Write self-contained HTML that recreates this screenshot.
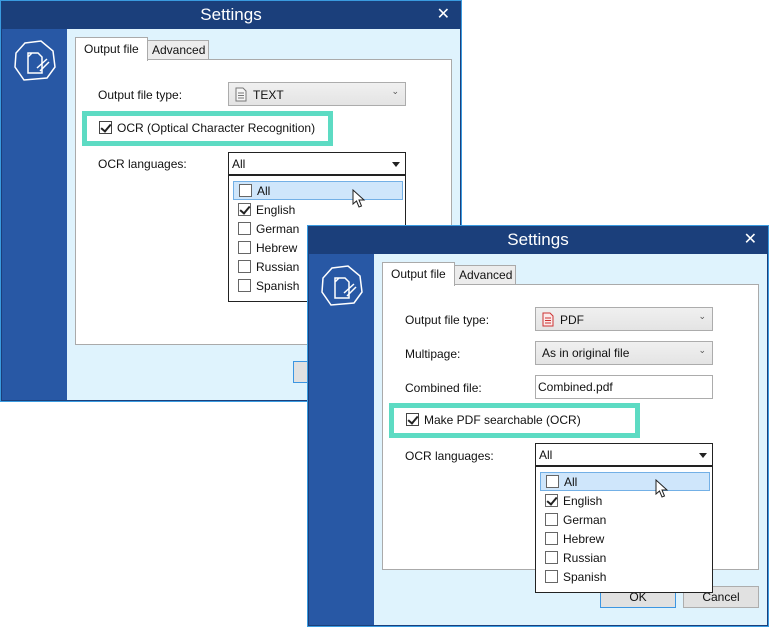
<!DOCTYPE html>
<html><head><style>
*{margin:0;padding:0;box-sizing:border-box}
body{width:769px;height:627px;background:#fff;position:relative;overflow:hidden;font-family:"Liberation Sans",sans-serif;font-size:12px;color:#111}
.win{position:absolute;width:462px;height:402px;background:#1b3f7b;border:1px solid #3a9be0}
.win .in{position:absolute;left:-1px;top:-1px;right:-1px;bottom:1px}
.title{position:absolute;left:0;right:0;top:0;height:29px;color:#fff;font-size:17px;text-align:center;line-height:29px}
.x{position:absolute;right:12px;top:0;color:#fff;font-size:16px;line-height:29px}
.side{position:absolute;left:2px;top:29px;width:65px;bottom:0;background:#2858a5}
.cont{position:absolute;left:67px;top:29px;right:2px;bottom:0;background:#dff3fd}
.a{position:absolute}
.tab1{left:75px;top:37px;width:73px;height:24px;background:#fff;border:1px solid #aaa;border-bottom:none;padding:4px 0 0 8px;z-index:2}
.tab2{left:147px;top:40px;width:62px;height:20px;background:#ececec;border:1px solid #aaa;padding:2px 0 0 4px}
.panel{left:75px;top:59px;width:377px;height:286px;background:#fff;border:1px solid #aaa}
.lbl{left:98px}
.combo{left:228px;width:178px;height:24px;background:linear-gradient(#f0f0f0,#e4e4e4);border:1px solid #acacac;padding:4px 0 0 6px}
.combo .v{position:absolute;right:6px;top:3px;font-size:9px;color:#555}
.hl{left:82px;width:251px;height:35px;background:#5ddbc3;padding:5px}
.hl div{background:#fff;width:100%;height:100%;padding:5px 0 0 12px}
.cb{display:inline-block;width:13px;height:13px;border:1px solid #444;vertical-align:-2px;margin-right:5px;position:relative;background:#fff}
.cb.c:after{content:"";position:absolute;left:3px;top:0px;width:4px;height:8px;border:solid #222;border-width:0 2px 2px 0;transform:rotate(40deg)}
.lc{left:228px;width:178px;height:24px;background:#fff;border:1px solid #222;padding:4px 0 0 3px}
.lc:after{content:"";position:absolute;right:5px;top:9px;border:4px solid transparent;border-top:5px solid #222;border-bottom:none}
.dd{left:228px;width:178px;height:128px;background:#fff;border:1px solid #222;border-top:2px solid #222;z-index:3}
.it{position:absolute;left:4px;width:170px;height:19px;padding:2px 0 0 5px}
.it .cb{border-color:#666}
.sel{background:#cfe6fb;border:1px solid #73b0e6}
.btn{top:361px;width:76px;height:22px;background:#e1e1e1;border:1px solid #adadad;text-align:center;line-height:20px}
.ok{border-color:#3c96e2}
</style></head><body>

<!-- window 1 -->
<div class="win" style="left:0;top:0;z-index:1">
<div class="in">
<div class="title">Settings</div><div class="x">✕</div>
<div class="side"></div><div class="cont"></div>
<svg class="a" style="left:13px;top:40px" width="44" height="42" viewBox="0 0 44 42"><path d="M12 3 L28 1 L40 11 L42 27 L34 38 L11 40 L2 27 L3 13 Z" fill="none" stroke="#fff" stroke-width="1.5"/><path d="M15 13 L25 13 L29 17 L29 33 L15 33 Z M15 17 L19 13" fill="none" stroke="#fff" stroke-width="1.5"/><path d="M24 28 L34 19 M27 31 L36 22" stroke="#fff" stroke-width="1.5"/></svg>
<div class="a panel"></div>
<div class="a tab2">Advanced</div>
<div class="a tab1">Output file</div>
<div class="a lbl" style="top:88px">Output file type:</div>
<div class="a combo" style="top:82px"><svg width="12" height="15" style="vertical-align:-3px;margin-right:6px"><path d="M1 1H8L11 4V14H1Z" fill="#f6f6f6" stroke="#777"/><path d="M3 6H9M3 8.5H9M3 11H9" stroke="#777"/></svg>TEXT<span class="v">⌄</span></div>
<div class="a hl" style="top:111px"><div><span class="cb c"></span>OCR (Optical Character Recognition)</div></div>
<div class="a lbl" style="top:157px">OCR languages:</div>
<div class="a lc" style="top:152px">All</div>
<div class="a dd" style="top:174px">
<div class="it sel" style="top:5px"><span class="cb"></span>All</div>
<div class="it" style="top:25px"><span class="cb c"></span>English</div>
<div class="it" style="top:44px"><span class="cb"></span>German</div>
<div class="it" style="top:63px"><span class="cb"></span>Hebrew</div>
<div class="it" style="top:82px"><span class="cb"></span>Russian</div>
<div class="it" style="top:101px"><span class="cb"></span>Spanish</div>
</div>
<div class="a btn ok" style="left:293px">OK</div>
<svg class="a" style="left:352px;top:189px;z-index:4" width="14" height="20"><path d="M1 1V15L4.5 12L7 18L9.5 17L7 11H12Z" fill="#fff" stroke="#222"/></svg>
</div></div>

<!-- window 2 -->
<div class="win" style="left:307px;top:225px;z-index:2">
<div class="in">
<div class="title">Settings</div><div class="x">✕</div>
<div class="side"></div><div class="cont"></div>
<svg class="a" style="left:13px;top:40px" width="44" height="42" viewBox="0 0 44 42"><path d="M12 3 L28 1 L40 11 L42 27 L34 38 L11 40 L2 27 L3 13 Z" fill="none" stroke="#fff" stroke-width="1.5"/><path d="M15 13 L25 13 L29 17 L29 33 L15 33 Z M15 17 L19 13" fill="none" stroke="#fff" stroke-width="1.5"/><path d="M24 28 L34 19 M27 31 L36 22" stroke="#fff" stroke-width="1.5"/></svg>
<div class="a panel"></div>
<div class="a tab2">Advanced</div>
<div class="a tab1">Output file</div>
<div class="a lbl" style="top:88px">Output file type:</div>
<div class="a combo" style="top:82px"><svg width="12" height="15" style="vertical-align:-3px;margin-right:6px"><path d="M1 1H8L11 4V14H1Z" fill="#fbeaea" stroke="#c33"/><path d="M3 6H9M3 8.5H9M3 11H9" stroke="#c33"/></svg>PDF<span class="v">⌄</span></div>
<div class="a lbl" style="top:122px">Multipage:</div>
<div class="a combo" style="top:116px">As in original file<span class="v">⌄</span></div>
<div class="a lbl" style="top:156px">Combined file:</div>
<div class="a" style="left:228px;top:150px;width:178px;height:24px;background:#fff;border:1px solid #acacac;padding:4px 0 0 2px">Combined.pdf</div>
<div class="a hl" style="top:178px"><div><span class="cb c"></span>Make PDF searchable (OCR)</div></div>
<div class="a lbl" style="top:224px">OCR languages:</div>
<div class="a lc" style="top:218px">All</div>
<div class="a btn ok" style="left:293px">OK</div>
<div class="a btn" style="left:376px">Cancel</div>
<div class="a dd" style="top:240px">
<div class="it sel" style="top:5px"><span class="cb"></span>All</div>
<div class="it" style="top:25px"><span class="cb c"></span>English</div>
<div class="it" style="top:44px"><span class="cb"></span>German</div>
<div class="it" style="top:63px"><span class="cb"></span>Hebrew</div>
<div class="it" style="top:82px"><span class="cb"></span>Russian</div>
<div class="it" style="top:101px"><span class="cb"></span>Spanish</div>
</div>
<svg class="a" style="left:348px;top:254px;z-index:4" width="14" height="20"><path d="M1 1V15L4.5 12L7 18L9.5 17L7 11H12Z" fill="#fff" stroke="#222"/></svg>
</div></div>
</body></html>
